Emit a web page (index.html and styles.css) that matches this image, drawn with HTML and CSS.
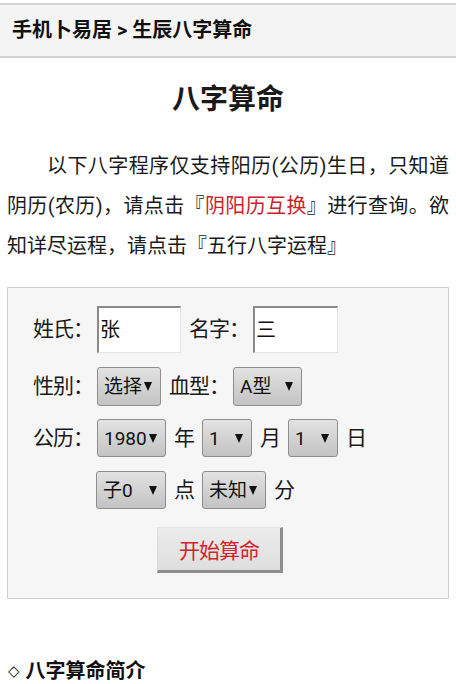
FILE: index.html
```html
<!DOCTYPE html>
<html lang="zh-CN">
<head>
<meta charset="utf-8">
<title>生辰八字算命</title>
<link rel="stylesheet" href="styles.css">
</head>
<body>
<div class="topbar">手机卜易居 &gt; 生辰八字算命</div>
<h1 class="title">八字算命</h1>
<p class="intro">以下八字程序仅支持阳历(公历)生日，只知道阴历(农历)，请点击『<a class="link" href="#">阴阳历互换</a>』进行查询。欲知详尽运程，请点击『五行八字运程』</p>
<div class="form">
  <div class="row row-name">
    <span class="lbl">姓氏：</span>
    <span class="input input-a">张</span>
    <span class="lbl">名字：</span>
    <span class="input input-b">三</span>
  </div>
  <div class="row row-sel">
    <span class="lbl">性别：</span>
    <span class="sel w64"><span>选择</span><i class="arrow"></i></span>
    <span class="lbl">血型：</span>
    <span class="sel w69"><span>A型</span><i class="arrow"></i></span>
  </div>
  <div class="row row-date">
    <span class="lbl">公历：</span>
    <span class="sel w69"><span>1980</span><i class="arrow"></i></span>
    <span class="unit">年</span>
    <span class="sel w50"><span>1</span><i class="arrow"></i></span>
    <span class="unit">月</span>
    <span class="sel w50"><span>1</span><i class="arrow"></i></span>
    <span class="unit">日</span>
  </div>
  <div class="row row-time">
    <span class="sel w70"><span>子0</span><i class="arrow"></i></span>
    <span class="unit">点</span>
    <span class="sel w64"><span>未知</span><i class="arrow"></i></span>
    <span class="unit">分</span>
  </div>
  <div class="row row-btn">
    <button class="btn" type="button">开始算命</button>
  </div>
</div>
<h2 class="section"><span class="dia">◇</span>八字算命简介</h2>
</body>
</html>
```

FILE: styles.css
```css
html, body {
  margin: 0;
  padding: 0;
  background: #ffffff;
}
body {
  font-family: Roboto, "Noto Sans CJK SC", sans-serif;
  color: #111;
}
.topbar {
  margin-top: 3px;
  height: 51px;
  line-height: 51px;
  padding-left: 12px;
  background: #f4f4f4;
  border-top: 2px solid #d2d2d2;
  border-bottom: 2px solid #d2d2d2;
  font-size: 20px;
  font-weight: 700;
  color: #111;
}
.title {
  margin: 22px 0 0;
  text-align: center;
  font-size: 28px;
  line-height: 40px;
  font-weight: 700;
  color: #1a1a1a;
}
.intro {
  margin: 26px 0 0;
  padding: 0 7px;
  font-size: 20px;
  line-height: 40px;
  text-indent: 2em;
  text-align: justify;
  color: #1a1a1a;
}
.link {
  color: #cc2229;
  text-decoration: none;
}
.form {
  margin: 21px 7px 0;
  padding: 18px 25px 25px;
  background: #f6f6f6;
  border: 1px solid #cfcfcf;
}
.row {
  display: flex;
  align-items: center;
  gap: 8px;
  font-size: 21px;
  letter-spacing: -1px;
  line-height: 1;
}
.row-name { height: 47px; margin-bottom: 14px; }
.row-sel { height: 39px; margin-bottom: 13px; }
.row-date { height: 38px; margin-bottom: 14px; }
.row-time { height: 38px; margin-bottom: 18px; padding-left: 63px; }
.row-btn { height: 46px; padding-left: 124px; }
.lbl {
  margin-right: -4px;
  color: #1a1a1a;
}
.unit {
  color: #1a1a1a;
}
.input {
  box-sizing: border-box;
  display: flex;
  align-items: center;
  height: 47px;
  padding-left: 1px;
  background: #fff;
  border-top: 2px solid #8a8a8a;
  border-left: 2px solid #8a8a8a;
  border-right: 1px solid #e4e4e4;
  border-bottom: 1px solid #e4e4e4;
  font-size: 20px;
  letter-spacing: 0;
  color: #111;
}
.input-a { width: 84px; }
.input-b { width: 85px; }
.sel {
  box-sizing: border-box;
  display: flex;
  align-items: center;
  justify-content: space-between;
  height: 38px;
  padding: 0 8px 0 6px;
  background: linear-gradient(#e2e2e2, #c3c3c3);
  border: 1px solid #8e8e8e;
  border-radius: 3px;
  font-size: 19px;
  letter-spacing: 0;
  color: #111;
}
.row-sel .sel { height: 39px; }
.w50 { width: 50px; }
.w64 { width: 64px; }
.w69 { width: 69px; }
.w70 { width: 70px; }
.arrow {
  width: 0;
  height: 0;
  border-left: 4px solid transparent;
  border-right: 4px solid transparent;
  border-top: 9px solid #111;
}
.btn {
  box-sizing: border-box;
  width: 126px;
  height: 46px;
  margin: 0;
  padding: 0;
  background: linear-gradient(#ececec, #dedede);
  border-top: 1px solid #e4e4e4;
  border-left: 1px solid #dadada;
  border-right: 3px solid #8e8e8e;
  border-bottom: 3px solid #8e8e8e;
  font-family: Roboto, "Noto Sans CJK SC", sans-serif;
  font-size: 21px;
  letter-spacing: -1px;
  color: #d2232a;
}
.section {
  margin: 57px 0 0;
  padding-left: 8px;
  font-size: 20px;
  line-height: 30px;
  font-weight: 700;
  color: #111;
}
.dia {
  font-family: "DejaVu Sans", sans-serif;
  font-size: 15px;
  font-weight: 400;
  margin-right: 6px;
  vertical-align: 2px;
}
```
